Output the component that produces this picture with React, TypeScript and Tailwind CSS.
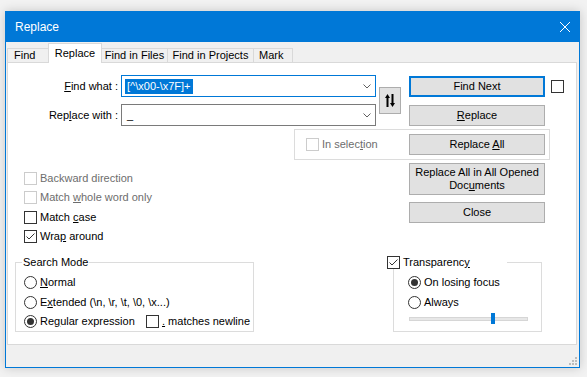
import type { ReactNode } from 'react';

function CheckBox({ checked = false, disabled = false }: { checked?: boolean; disabled?: boolean }) {
  return (
    <span
      className={`w-[13px] h-[13px] border bg-white flex items-center justify-center shrink-0 ${
        disabled ? 'border-[#cccccc]' : 'border-[#333333]'
      }`}
    >
      {checked && (
        <svg width="11" height="11" viewBox="0 0 11 11">
          <path d="M1.5 5.5 L4 8 L9.5 2.5" stroke="#333333" strokeWidth="1" fill="none" />
        </svg>
      )}
    </span>
  );
}

function Radio({ checked = false }: { checked?: boolean }) {
  return (
    <span className="w-[13px] h-[13px] rounded-full border border-[#333333] bg-white flex items-center justify-center shrink-0">
      {checked && <span className="w-[7px] h-[7px] rounded-full bg-[#333333]" />}
    </span>
  );
}

function Option({ box, children, disabled = false }: { box: ReactNode; children: ReactNode; disabled?: boolean }) {
  return (
    <div className="h-[13px] flex items-center">
      {box}
      <span className={`ml-[3px] leading-[13px] whitespace-nowrap ${disabled ? 'text-[#6d6d6d]' : 'text-black'}`}>
        {children}
      </span>
    </div>
  );
}

function Btn({ children, className = '' }: { children: ReactNode; className?: string }) {
  return (
    <div
      className={`w-[136px] bg-[#e1e1e1] flex items-center justify-center text-center leading-[13px] ${
        className || 'h-[21px] border border-[#adadad]'
      }`}
    >
      {children}
    </div>
  );
}

function Chevron() {
  return (
    <svg width="8" height="5" viewBox="0 0 8 5" className="ml-auto mr-[4px] shrink-0">
      <path d="M0.5 0.5 L4 4 L7.5 0.5" stroke="#606060" strokeWidth="1" fill="none" />
    </svg>
  );
}

export default function App() {
  return (
    <div className="w-[587px] h-[377px] bg-[#f2f2f2] pt-[11px] pl-[5px] font-['Liberation_Sans',Arial,sans-serif] text-[11px] text-black overflow-hidden">
      <div className="w-[575px] h-[357px] border border-[#0078d7] bg-[#f0f0f0] flex flex-col shadow-[0_0_10px_rgba(0,0,0,0.18)]">
        {/* title bar */}
        <div className="h-[30px] shrink-0 bg-[#0078d7] flex items-center pl-[9px] pr-[9px] text-white text-[12px]">
          <span>Replace</span>
          <svg className="ml-auto" width="10" height="10" viewBox="0 0 10 10">
            <path d="M0 0 L10 10 M10 0 L0 10" stroke="white" strokeWidth="1" />
          </svg>
        </div>

        {/* tabs */}
        <div className="h-[20px] shrink-0 flex items-end pl-[1px] relative z-10">
          <div className="w-[42px] h-[14px] border-t border-l border-r border-[#d9d9d9] bg-[#f0f0f0] pl-[6px] leading-[13px]">Find</div>
          <div className="w-[54px] h-[20px] -ml-[1px] mb-[-1px] border-t border-l border-r border-[#d9d9d9] bg-white flex justify-center pt-[3px] leading-[13px]">Replace</div>
          <div className="w-[67px] h-[14px] -ml-[1px] border-t border-l border-r border-[#d9d9d9] bg-[#f0f0f0] flex justify-center leading-[13px] whitespace-nowrap">Find in Files</div>
          <div className="w-[87px] h-[14px] -ml-[1px] border-t border-l border-r border-[#d9d9d9] bg-[#f0f0f0] flex justify-center leading-[13px] whitespace-nowrap">Find in Projects</div>
          <div className="w-[40px] h-[14px] -ml-[1px] border-t border-l border-r border-[#d9d9d9] bg-[#f0f0f0] pl-[5px] leading-[13px]">Mark</div>
        </div>

        {/* tab panel */}
        <div className="ml-[1px] mr-[2px] h-[283px] shrink-0 bg-white border border-[#d9d9d9] flex flex-col">
          {/* find / replace fields */}
          <div className="mt-[12px] flex items-start">
            <div className="w-[110px] flex flex-col items-end gap-[7px]">
              <div className="h-[22px] flex items-center whitespace-nowrap">
                <u>F</u>ind what :
              </div>
              <div className="h-[22px] flex items-center whitespace-nowrap">
                Rep<u>l</u>ace with :
              </div>
            </div>
            <div className="ml-[3px] flex flex-col gap-[7px]">
              <div className="w-[255px] h-[22px] border border-[#0078d7] flex items-center pl-[3px]">
                <span className="h-[15px] leading-[15px] px-[2px] bg-[#0078d7] text-white whitespace-nowrap">[^\x00-\x7F]+</span>
                <Chevron />
              </div>
              <div className="w-[255px] h-[22px] border border-[#7a7a7a] flex items-center pl-[5px]">
                <span className="leading-[13px]">_</span>
                <Chevron />
              </div>
            </div>
            <div className="ml-[3px] self-center w-[22px] h-[27px] bg-[#e1e1e1] border border-[#adadad] flex items-center justify-center">
              <svg width="10" height="13" viewBox="0 0 10 13">
                <path d="M2.5 0 L5 4 L0 4 Z" fill="#000" />
                <rect x="1.5" y="3" width="2" height="10" fill="#000" />
                <rect x="6.5" y="0" width="2" height="10" fill="#000" />
                <path d="M5 9 L10 9 L7.5 13 Z" fill="#000" />
              </svg>
            </div>
            <div className="ml-[8px] flex flex-col">
              <Btn className="mt-[1px] h-[21px] border-2 border-[#0078d7]">Find Next</Btn>
              <Btn className="mt-[8px] h-[21px] border border-[#adadad]">
                <span>
                  <u>R</u>eplace
                </span>
              </Btn>
            </div>
            <div className="ml-[6px] mt-[5px]">
              <CheckBox />
            </div>
          </div>

          {/* in selection group */}
          <div className="mt-[3px] ml-[286px] w-[256px] h-[31px] border border-[#dcdcdc] flex items-center pl-[11px] pr-[4px]">
            <Option box={<CheckBox disabled />} disabled>
              In selec<u>t</u>ion
            </Option>
            <div className="ml-auto">
              <Btn>
                <span>
                  Replace <u>A</u>ll
                </span>
              </Btn>
            </div>
          </div>

          {/* options + buttons */}
          <div className="flex items-start">
            <div className="ml-[16px] pt-[12px] flex flex-col">
              <Option box={<CheckBox disabled />} disabled>
                Backward direction
              </Option>
              <div className="mt-[6px]">
                <Option box={<CheckBox disabled />} disabled>
                  Match <u>w</u>hole word only
                </Option>
              </div>
              <div className="mt-[7px]">
                <Option box={<CheckBox />}>
                  Match <u>c</u>ase
                </Option>
              </div>
              <div className="mt-[6px]">
                <Option box={<CheckBox checked />}>
                  Wra<u>p</u> around
                </Option>
              </div>
            </div>
            <div className="ml-auto mr-[31px] mt-[3px] flex flex-col">
              <Btn className="h-[32px] border border-[#adadad]">
                <span>
                  Replace All in All Opened
                  <br />
                  Doc<u>u</u>ments
                </span>
              </Btn>
              <Btn className="mt-[7px] h-[21px] border border-[#adadad]">Close</Btn>
            </div>
          </div>

          {/* search mode + transparency */}
          <div className="mt-[19px] flex items-start">
            <div className="ml-[7px] w-[239px] h-[70px] border border-[#dcdcdc] relative pt-[13px] pl-[8px] flex flex-col">
              <span className="absolute left-[6px] -top-[7px] bg-white px-[1px] leading-[13px]">Search Mode</span>
              <Option box={<Radio />}>
                <u>N</u>ormal
              </Option>
              <div className="mt-[7px]">
                <Option box={<Radio />}>
                  E<u>x</u>tended (\n, \r, \t, \0, \x...)
                </Option>
              </div>
              <div className="mt-[6px] flex items-center">
                <div className="w-[122px]">
                  <Option box={<Radio checked />}>
                    Re<u>g</u>ular expression
                  </Option>
                </div>
                <Option box={<CheckBox />}>
                  <u>.</u> matches newline
                </Option>
              </div>
            </div>

            <div className="ml-[139px] w-[149px] h-[70px] border border-[#dcdcdc] relative pt-[13px] pl-[14px] flex flex-col">
              <div className="absolute -left-[7px] -top-[7px] w-[120px] bg-white">
                <Option box={<CheckBox checked />}>
                  Transparenc<u>y</u>
                </Option>
              </div>
              <Option box={<Radio checked />}>On losing focus</Option>
              <div className="mt-[7px]">
                <Option box={<Radio />}>Always</Option>
              </div>
              <div className="mt-[4px] ml-[1px] relative w-[119px] h-[11px]">
                <div className="absolute left-0 top-[4px] w-full h-[4px] bg-[#e7e7e7] border border-[#d6d6d6]" />
                <div className="absolute left-[82px] top-0 w-[4px] h-[11px] bg-[#0078d7]" />
              </div>
            </div>
          </div>
        </div>

        {/* bottom strip with size grip */}
        <div className="flex-1 flex justify-end items-end pr-[2px] pb-[2px]">
          <svg width="8" height="8" viewBox="0 0 8 8">
            <rect x="6" y="0" width="2" height="2" fill="#bcbcbc" />
            <rect x="3" y="3" width="2" height="2" fill="#bcbcbc" />
            <rect x="6" y="3" width="2" height="2" fill="#bcbcbc" />
            <rect x="0" y="6" width="2" height="2" fill="#bcbcbc" />
            <rect x="3" y="6" width="2" height="2" fill="#bcbcbc" />
            <rect x="6" y="6" width="2" height="2" fill="#bcbcbc" />
          </svg>
        </div>
      </div>
    </div>
  );
}
